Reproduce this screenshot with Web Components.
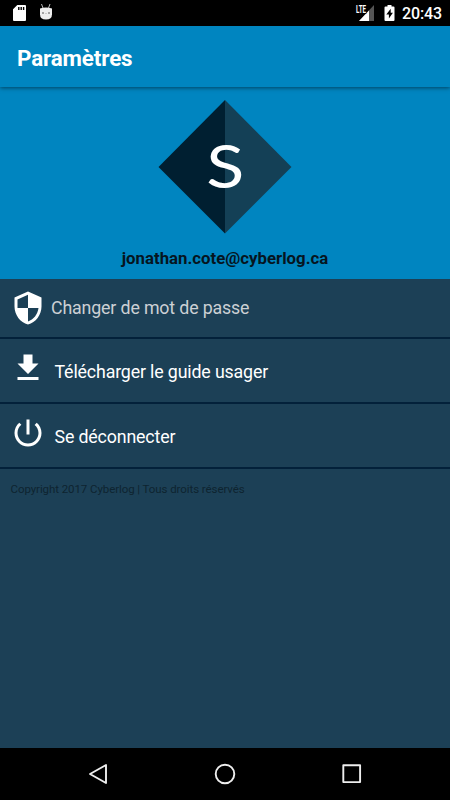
<!DOCTYPE html>
<html lang="fr">
<head>
<meta charset="utf-8">
<meta name="viewport" content="width=device-width, initial-scale=1">
<title>Paramètres</title>
<style>
  html, body {
    margin: 0;
    height: 100%;
    background: #1c4056;
    overflow: hidden;
    font-family: Roboto, "Liberation Sans", sans-serif;
  }
</style>
</head>
<body>

<settings-screen></settings-screen>

<template id="tpl-status-bar">
  <style>
    :host {
      display: flex;
      align-items: center;
      height: 26px;
      flex: none;
      box-sizing: border-box;
      padding: 0 8px 0 13px;
      background: #000;
      color: #fff;
    }
    svg { display: block; flex: none; }
    .droid { margin-left: 12px; }
    .signal { margin-left: auto; }
    .battery { margin-left: 9px; }
    .clock {
      margin-left: 7px;
      width: 40px;
      font-size: 16px;
      font-weight: 500;
      line-height: 26px;
      padding-top: 2px;
      letter-spacing: -.1px;
      white-space: nowrap;
    }
  </style>
  <svg width="13" height="26" viewBox="0 0 13 26">
    <path fill="#fff" fill-rule="evenodd" d="M4.300 5H12q1 0 1 1v14q0 1-1 1H1q-1 0-1-1V9.300zM5.100 7v3h1.400V7zM7.500 7v3h1.400V7zM9.900 7v3h1.400V7z"/>
  </svg>
  <svg class="droid" width="16" height="26" viewBox="0 0 16 26">
    <path stroke="#bbb" d="M3.500 4l1.500 4M12 4l-1.500 4"/>
    <path fill="#eee" d="M2 8.500Q8 6.500 14 8.500v5.800q0 5.200-6 5.200t-6-5.200z"/>
    <circle cx="5" cy="13" r=".8" fill="#444"/>
    <circle cx="11" cy="13" r=".8" fill="#444"/>
    <path stroke="#ccc" d="M7 13.500h2"/>
  </svg>
  <svg class="signal" width="20" height="26" viewBox="0 0 20 26">
    <path fill="#555" d="M19 5v16H4z"/>
    <path fill="#fff" d="M14 10.400V21H4z"/>
    <text x="1" y="12.500" fill="#fff" stroke="#000" stroke-width="1.500" paint-order="stroke" font-size="10" font-weight="700" textLength="10" lengthAdjust="spacingAndGlyphs">LTE</text>
  </svg>
  <svg class="battery" width="11" height="26" viewBox="0 0 11 26">
    <path fill="#fff" d="M3.500 5h4v1.600h2q1 0 1 1V20q0 1-1 1h-8q-1 0-1-1V7.600q0-1 1-1h2z"/>
    <path fill="#000" d="M6.700 8.700L2.300 14.600h2.600v4L8.900 12.700H6.700z"/>
  </svg>
  <span class="clock">20:43</span>
</template>

<template id="tpl-app-bar">
  <style>
    :host {
      display: flex;
      align-items: center;
      flex: none;
      height: 61px;
      padding-left: 17px;
      background: #0085c0;
      color: #fff;
      position: relative;
      box-shadow: 0 1px 4px rgba(0, 0, 0, .5);
    }
    h1 {
      margin: 0;
      padding-top: 3px;
      font-size: 22.400px;
      font-weight: 700;
      line-height: 28px;
      letter-spacing: -.13px;
    }
  </style>
  <h1><slot></slot></h1>
</template>

<template id="tpl-profile-header">
  <style>
    :host {
      display: flex;
      flex-direction: column;
      align-items: center;
      flex: none;
      height: 192px;
      box-sizing: border-box;
      padding-top: 13px;
      background: #0085c0;
      color: #06151f;
    }
    svg { display: block; }
    .email {
      margin-top: 14px;
      font-size: 16.800px;
      font-weight: 700;
      line-height: 20px;
    }
  </style>
  <svg width="134" height="134" viewBox="0 0 134 134">
    <path fill="#001f31" d="M67 0v133.500L.500 67z"/>
    <path fill="#144056" d="M67 0v133.500L133.500 67z"/>
    <text transform="translate(67.300 88.200) scale(1.170 1)" text-anchor="middle" fill="#fff" font-family="Lato, sans-serif" font-size="60">S</text>
  </svg>
  <div class="email"><slot></slot></div>
</template>

<template id="tpl-menu-item">
  <style>
    :host {
      display: flex;
      flex: none;
      height: 63px;
      padding-left: 10px;
      border-bottom: 2px solid #03213a;
      color: #fff;
      font-size: 17.800px;
      letter-spacing: -.15px;
    }
    :host([muted]) {
      height: 58px;
      color: #ccd0d4;
    }
    svg {
      display: block;
      flex: none;
      width: 36px;
      height: 36px;
      margin-top: 10.500px;
      fill: #fff;
    }
    .label {
      margin: 20.500px 0 0 8.500px;
      line-height: 24px;
      white-space: nowrap;
    }
    :host([muted]) .label { margin: 17px 0 0 5px; }
  </style>
  <svg viewBox="0 0 24 24"><path></path></svg>
  <span class="label"><slot></slot></span>
</template>

<template id="tpl-nav-bar">
  <style>
    :host {
      display: flex;
      justify-content: space-between;
      align-items: center;
      flex: none;
      height: 52px;
      box-sizing: border-box;
      padding: 0 86px;
      background: #000;
    }
    svg {
      display: block;
      fill: none;
      stroke: #eee;
      stroke-width: 1.900;
      stroke-linejoin: round;
    }
  </style>
  <svg width="24" height="24" viewBox="0 0 24 24"><path d="M20 3v18L4 12z"/></svg>
  <svg width="24" height="24" viewBox="0 0 24 24"><circle cx="12" cy="12" r="9.300"/></svg>
  <svg width="24" height="24" viewBox="0 0 24 24"><rect x="3.300" y="3.300" width="16.800" height="16.800"/></svg>
</template>

<template id="tpl-settings-screen">
  <style>
    :host {
      display: flex;
      flex-direction: column;
      height: 100vh;
      background: #1c4056;
    }
    main { flex: 1; }
    footer {
      padding: 12px 0 0 10.500px;
      color: #0e2430;
      font-size: 11.500px;
      letter-spacing: -.08px;
      line-height: 17px;
    }
  </style>
  <status-bar></status-bar>
  <app-bar>Paramètres</app-bar>
  <profile-header>jonathan.cote@cyberlog.ca</profile-header>
  <main>
    <menu-item icon="shield" muted>Changer de mot de passe</menu-item>
    <menu-item icon="download">Télécharger le guide usager</menu-item>
    <menu-item icon="power">Se déconnecter</menu-item>
    <footer>Copyright 2017 Cyberlog | Tous droits réservés</footer>
  </main>
  <nav-bar></nav-bar>
</template>

<script>
  const ICONS = {
    shield: 'M12 1L3 5v6c0 5.550 3.840 10.740 9 12 5.160-1.260 9-6.450 9-12V5l-9-4zm0 10.990h7c-.53 4.120-3.280 7.790-7 8.940V12H5V6.300l7-3.110v8.800z',
    download: 'M19 9h-4V3H9v6H5l7 7 7-7zM5 18v2h14v-2H5z',
    power: 'M13 3h-2v10h2V3zm4.830 2.170l-1.420 1.420C17.990 7.860 19 9.810 19 12c0 3.870-3.130 7-7 7s-7-3.130-7-7c0-2.190 1.010-4.140 2.580-5.420L6.170 5.170C4.230 6.820 3 9.260 3 12c0 4.970 4.030 9 9 9s9-4.030 9-9c0-2.740-1.230-5.180-3.170-6.830z'
  };

  class TemplateElement extends HTMLElement {
    constructor() {
      super();
      const el = document
        .querySelector(`#tpl-${this.localName}`)
        .content.cloneNode(true);
      this.attachShadow({ mode: "open" }).appendChild(el);
    }
  }

  class MenuItem extends TemplateElement {
    connectedCallback() {
      const icon = this.getAttribute("icon");
      if (!ICONS[icon]) console.error("Menu item needs a known icon");
      this.shadowRoot.querySelector("path").setAttribute("d", ICONS[icon]);
    }
  }

  customElements.define("status-bar", class extends TemplateElement {});
  customElements.define("app-bar", class extends TemplateElement {});
  customElements.define("profile-header", class extends TemplateElement {});
  customElements.define("menu-item", MenuItem);
  customElements.define("nav-bar", class extends TemplateElement {});
  customElements.define("settings-screen", class extends TemplateElement {});
</script>
</body>
</html>
